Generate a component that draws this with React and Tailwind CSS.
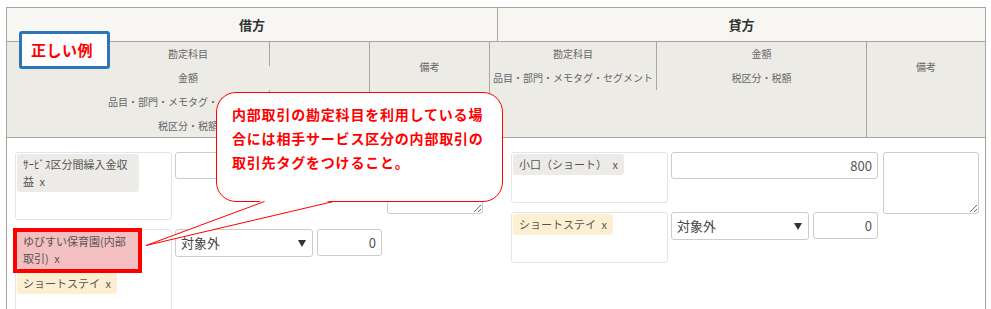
import React from "react";

const B = "border-[#aaa59e]";

function Tag({ color, text, red }) {
  return (
    <div className={`relative max-w-[122px] rounded-[3px] px-[6px] py-[2px] text-[11px] leading-[17px] text-[#555] ${color}`}>
      {`${text}\u2002x`}
      {red && (
        <div className="absolute left-[-4px] right-[-3px] top-[-3px] bottom-[-4px] border-[4px] border-[#ff0000]" />
      )}
    </div>
  );
}

function TagBox({ children }) {
  return (
    <div className="w-[157px] shrink-0 rounded-[3px] border border-[#e4e4e4] bg-white p-[1px]">
      <div className="flex flex-col items-start gap-[4px]">{children}</div>
      <div className="h-[26px]" />
    </div>
  );
}

function Input({ value, w }) {
  return (
    <div className={`${w} h-[27px] rounded-[3px] border border-[#cccccc] bg-white pr-[5px] text-right text-[13px] leading-[25px] text-[#555]`}>
      {value}
    </div>
  );
}

function Select() {
  return (
    <div className="flex h-[28px] w-[138px] items-center justify-between rounded-[3px] border border-[#cccccc] bg-white pl-[5px] pr-[6px] text-[13px] text-[#444]">
      <span>対象外</span>
      <svg width="8" height="7" viewBox="0 0 8 7">
        <polygon points="0,0 8,0 4,7" fill="#333" />
      </svg>
    </div>
  );
}

function Side({ rows }) {
  return (
    <div className="flex items-start">
      <div className="flex w-[367px] flex-col gap-[9px]">
        {rows.map((r, i) => (
          <div key={i} className="flex items-start gap-[3px]">
            <TagBox>{r.tags}</TagBox>
            {r.controls}
          </div>
        ))}
      </div>
      <textarea
        readOnly
        className="ml-[5px] h-[62px] w-[96px] resize rounded-[3px] border border-[#cccccc] bg-white outline-none"
      />
    </div>
  );
}

export default function App() {
  const font = { fontFamily: '"Noto Sans CJK JP", "Noto Sans", sans-serif' };
  return (
    <div className="relative h-[309px] w-[991px] overflow-hidden bg-white" style={font}>
      <div className="pl-[6px] pt-[7px]">
        <div className={`w-[980px] border-x border-t ${B}`}>
          {/* header row 1 */}
          <div className={`flex h-[34px] border-b ${B} bg-[#f7f6f2] text-[13px] font-bold text-[#333]`}>
            <div className={`flex w-[491px] items-center justify-center border-r ${B}`}>借方</div>
            <div className="flex flex-1 items-center justify-center">貸方</div>
          </div>
          {/* header row 2 */}
          <div className={`flex h-[96px] border-b ${B} bg-[#edebe6] text-[10px] text-[#666]`}>
            <div className={`relative w-[363px] border-r ${B} text-center leading-[24px]`}>
              <div>勘定科目</div>
              <div>金額</div>
              <div className="whitespace-nowrap">品目・部門・メモタグ・セグメント</div>
              <div>税区分・税額</div>
              <div className="absolute left-[262px] top-0 h-[24px] w-px bg-[#aaa59e]" />
              <div className="absolute left-[262px] top-[48px] h-[24px] w-px bg-[#aaa59e]" />
            </div>
            <div className={`w-[120px] border-r ${B} pt-[13px] text-center leading-[24px]`}>備考</div>
            <div className={`w-[377px] border-r ${B}`}>
              <div className="flex h-[48px] text-center leading-[24px]">
                <div className={`w-[167px] border-r ${B}`}>
                  <div>勘定科目</div>
                  <div className="whitespace-nowrap">品目・部門・メモタグ・セグメント</div>
                </div>
                <div className="flex-1">
                  <div>金額</div>
                  <div>税区分・税額</div>
                </div>
              </div>
            </div>
            <div className="flex-1 pt-[13px] text-center leading-[24px]">備考</div>
          </div>
          {/* body */}
          <div className="flex h-[200px] pt-[14px]">
            <div className="w-[491px] pl-[8px]">
              <Side
                rows={[
                  {
                    tags: <Tag color="bg-[#edebe7]" text="ｻｰﾋﾞｽ区分間繰入金収益" />,
                    controls: <Input value="" w="w-[207px]" />,
                  },
                  {
                    tags: (
                      <>
                        <Tag color="bg-[#f4bfc0]" red text="ゆびすい保育園(内部取引)" />
                        <Tag color="bg-[#fdf0d2]" text="ショートステイ" />
                      </>
                    ),
                    controls: (
                      <div className="flex gap-[4px]">
                        <Select />
                        <Input value="0" w="w-[65px]" />
                      </div>
                    ),
                  },
                ]}
              />
            </div>
            <div className="flex-1 pl-[13px]">
              <Side
                rows={[
                  {
                    tags: <Tag color="bg-[#edebe7]" text="小口（ショート）" />,
                    controls: <Input value="800" w="w-[207px]" />,
                  },
                  {
                    tags: <Tag color="bg-[#fdf0d2]" text="ショートステイ" />,
                    controls: (
                      <div className="flex gap-[4px]">
                        <Select />
                        <Input value="0" w="w-[65px]" />
                      </div>
                    ),
                  },
                ]}
              />
            </div>
          </div>
        </div>
      </div>

      {/* label */}
      <div className="absolute left-[19px] top-[31px] flex h-[38px] w-[91px] items-center rounded-[3px] border-[3px] border-[#2e75b6] bg-white pl-[9px] text-[15px] font-bold tracking-[0.5px] text-[#ff0000]">
        正しい例
      </div>

      {/* callout */}
      <div className="absolute left-[216px] top-[92px] h-[110px] w-[287px] rounded-[20px] border border-[#ff0000] bg-white pl-[15px] pt-[9px] text-[14px] font-bold leading-[24px] tracking-[0.8px] text-[#ff0000]">
        <div className="whitespace-nowrap">内部取引の勘定科目を利用している場</div>
        <div className="whitespace-nowrap">合には相手サービス区分の内部取引の</div>
        <div className="whitespace-nowrap">取引先タグをつけること。</div>
      </div>
      <svg className="pointer-events-none absolute left-0 top-0" width="991" height="309">
        <polygon points="264,200 334,200 147,245.5" fill="#ffffff" />
        <line x1="264.5" y1="201.5" x2="146" y2="245.5" stroke="#ff0000" strokeWidth="1" />
        <line x1="333.5" y1="201.5" x2="146" y2="245.5" stroke="#ff0000" strokeWidth="1" />
      </svg>
    </div>
  );
}
